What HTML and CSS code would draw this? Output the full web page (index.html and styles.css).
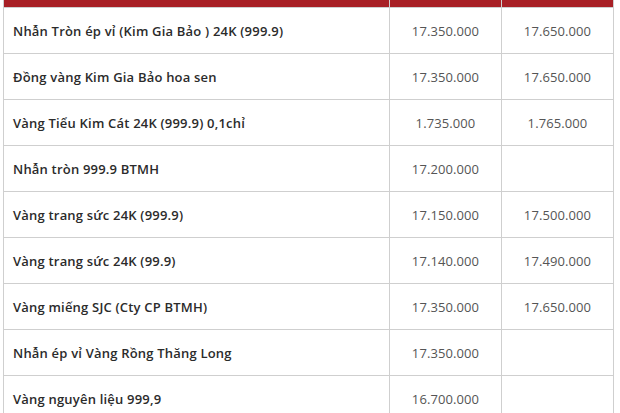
FILE: index.html
```html
<!DOCTYPE html>
<html lang="vi">
<head>
<meta charset="utf-8">
<link rel="stylesheet" href="styles.css">
</head>
<body>
<div class="wrap">
<table class="price">
<colgroup><col class="c1"><col class="c2"><col class="c3"></colgroup>
<thead><tr class="head"><th></th><th></th><th></th></tr></thead>
<tbody>
<tr><td class="name">Nhẫn Tròn ép vỉ (Kim Gia Bảo ) 24K (999.9)</td><td class="num">17.350.000</td><td class="num">17.650.000</td></tr>
<tr><td class="name">Đồng vàng Kim Gia Bảo hoa sen</td><td class="num">17.350.000</td><td class="num">17.650.000</td></tr>
<tr><td class="name">Vàng Tiểu Kim Cát 24K (999.9) 0,1chỉ</td><td class="num">1.735.000</td><td class="num">1.765.000</td></tr>
<tr><td class="name">Nhẫn tròn 999.9 BTMH</td><td class="num">17.200.000</td><td class="num"></td></tr>
<tr><td class="name">Vàng trang sức 24K (999.9)</td><td class="num">17.150.000</td><td class="num">17.500.000</td></tr>
<tr><td class="name">Vàng trang sức 24K (99.9)</td><td class="num">17.140.000</td><td class="num">17.490.000</td></tr>
<tr><td class="name">Vàng miếng SJC (Cty CP BTMH)</td><td class="num">17.350.000</td><td class="num">17.650.000</td></tr>
<tr><td class="name">Nhẫn ép vỉ Vàng Rồng Thăng Long</td><td class="num">17.350.000</td><td class="num"></td></tr>
<tr><td class="name">Vàng nguyên liệu 999,9</td><td class="num">16.700.000</td><td class="num"></td></tr>
</tbody>
</table>
</div>
</body>
</html>
```
FILE: styles.css
```css
html, body {
  margin: 0;
  padding: 0;
  background: #fff;
}
body {
  font-family: "Open Sans", "Liberation Sans", sans-serif;
  overflow: hidden;
  height: 413px;
}
.wrap {
  margin-left: 3px;
  width: 610px;
  border-right: 1px solid #3a3a3a;
}
.price {
  width: 610px;
  border-collapse: collapse;
  table-layout: fixed;
}
.c1 { width: 386px; }
.c2 { width: 112px; }
.c3 { width: 112px; }
.head th {
  height: 7px;
  padding: 0;
  background: #a81f25;
  border: 1px solid #cfcfcf;
  border-top: none;
}
.price td {
  height: 45px;
  padding: 0;
  border: 1px solid #cfcfcf;
  vertical-align: middle;
}
.name {
  padding-left: 9px !important;
  font-size: 13px;
  font-weight: 600;
  color: #2b2b2b;
  letter-spacing: 0.2px;
}
.num {
  text-align: center;
  font-size: 13px;
  font-weight: 400;
  color: #555;
  letter-spacing: 0.1px;
}
```
